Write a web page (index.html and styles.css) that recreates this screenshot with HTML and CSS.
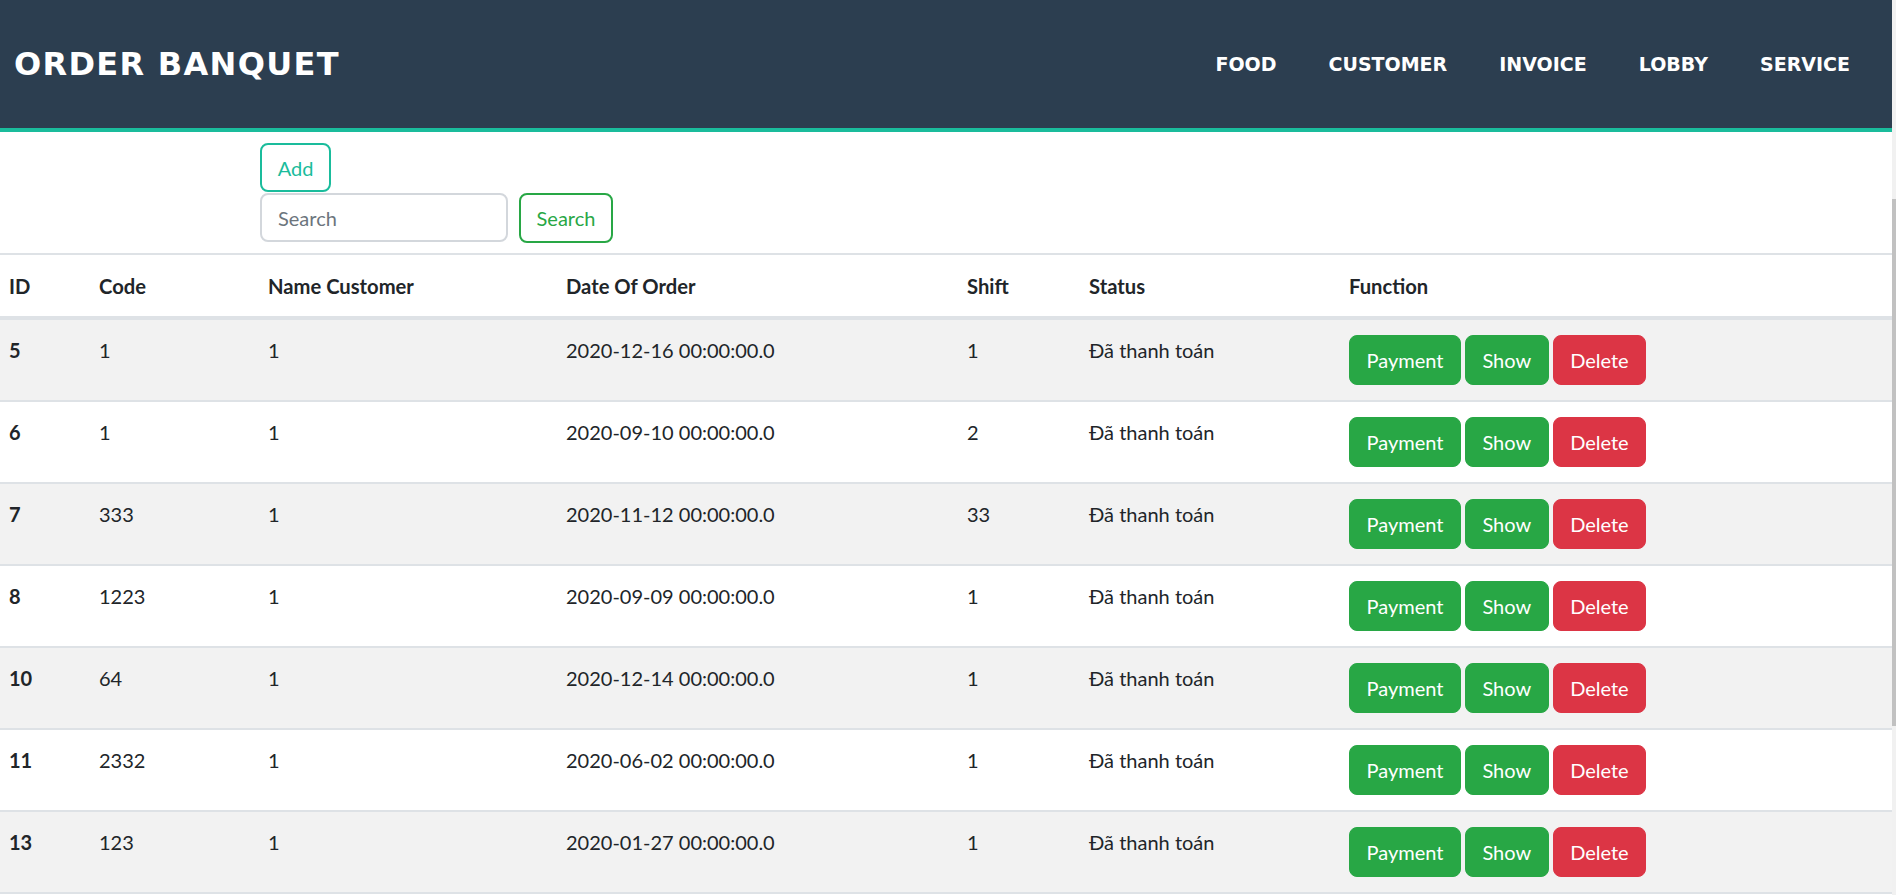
FILE: index.html
```html
<!DOCTYPE html>
<html lang="vi">
<head>
<meta charset="utf-8">
<title>Order Banquet</title>
<link rel="stylesheet" href="styles.css">
</head>
<body>
<div class="page">
  <div class="main">
    <header class="navbar">
      <div class="brand">ORDER BANQUET</div>
      <nav class="menu">
        <a href="#">FOOD</a>
        <a href="#">CUSTOMER</a>
        <a href="#">INVOICE</a>
        <a href="#">LOBBY</a>
        <a href="#">SERVICE</a>
      </nav>
    </header>

    <section class="toolbar">
      <button class="btn-add" type="button">Add</button>
      <form class="search">
        <input class="search-input" type="text" placeholder="Search">
        <button class="btn-search" type="button">Search</button>
      </form>
    </section>

    <table class="orders">
      <colgroup>
        <col class="c-id"><col class="c-code"><col class="c-name"><col class="c-date"><col class="c-shift"><col class="c-status"><col class="c-func">
      </colgroup>
      <thead>
        <tr><th>ID</th><th>Code</th><th>Name Customer</th><th>Date Of Order</th><th>Shift</th><th>Status</th><th>Function</th></tr>
      </thead>
      <tbody>
        <tr><td class="id">5</td><td>1</td><td>1</td><td>2020-12-16 00:00:00.0</td><td>1</td><td>Đã thanh toán</td>
          <td><div class="actions"><button class="btn green">Payment</button><button class="btn green">Show</button><button class="btn red">Delete</button></div></td></tr>
        <tr><td class="id">6</td><td>1</td><td>1</td><td>2020-09-10 00:00:00.0</td><td>2</td><td>Đã thanh toán</td>
          <td><div class="actions"><button class="btn green">Payment</button><button class="btn green">Show</button><button class="btn red">Delete</button></div></td></tr>
        <tr><td class="id">7</td><td>333</td><td>1</td><td>2020-11-12 00:00:00.0</td><td>33</td><td>Đã thanh toán</td>
          <td><div class="actions"><button class="btn green">Payment</button><button class="btn green">Show</button><button class="btn red">Delete</button></div></td></tr>
        <tr><td class="id">8</td><td>1223</td><td>1</td><td>2020-09-09 00:00:00.0</td><td>1</td><td>Đã thanh toán</td>
          <td><div class="actions"><button class="btn green">Payment</button><button class="btn green">Show</button><button class="btn red">Delete</button></div></td></tr>
        <tr><td class="id">10</td><td>64</td><td>1</td><td>2020-12-14 00:00:00.0</td><td>1</td><td>Đã thanh toán</td>
          <td><div class="actions"><button class="btn green">Payment</button><button class="btn green">Show</button><button class="btn red">Delete</button></div></td></tr>
        <tr><td class="id">11</td><td>2332</td><td>1</td><td>2020-06-02 00:00:00.0</td><td>1</td><td>Đã thanh toán</td>
          <td><div class="actions"><button class="btn green">Payment</button><button class="btn green">Show</button><button class="btn red">Delete</button></div></td></tr>
        <tr><td class="id">13</td><td>123</td><td>1</td><td>2020-01-27 00:00:00.0</td><td>1</td><td>Đã thanh toán</td>
          <td><div class="actions"><button class="btn green">Payment</button><button class="btn green">Show</button><button class="btn red">Delete</button></div></td></tr>
      </tbody>
    </table>
  </div>
  <div class="scrollbar"><div class="thumb"></div></div>
</div>
</body>
</html>
```

FILE: styles.css
```css
* { box-sizing: border-box; }
html, body { margin: 0; padding: 0; height: 100%; overflow: hidden; }
body {
  font-family: "Lato", "Open Sans", sans-serif;
  font-size: 20px;
  color: #212529;
  background: #fff;
}
.page { display: flex; height: 895px; }
.main { flex: 1; min-width: 0; }
.scrollbar { width: 4px; background: #f1f1f1; display: flex; flex-direction: column; }
.thumb { margin-top: 199px; height: 527px; background: #c1c1c1; }

.navbar {
  height: 132px;
  background: #2c3e50;
  border-bottom: 4px solid #1abc9c;
  display: flex;
  align-items: center;
  justify-content: space-between;
  padding: 0 16px 0 14px;
}
.brand {
  font-family: "DejaVu Sans", "Open Sans", sans-serif;
  font-weight: 700;
  font-size: 32px;
  color: #fff;
  letter-spacing: 1.3px;
}
.menu { display: flex; }
.menu a {
  font-family: "DejaVu Sans", "Open Sans", sans-serif;
  font-weight: 700;
  font-size: 19px;
  color: #fff;
  text-decoration: none;
  padding: 0 26px;
}

.toolbar { padding: 11px 0 0 260px; display: flex; flex-direction: column; align-items: flex-start; }
.btn-add {
  height: 49px;
  width: 71px;
  padding: 0;
  font: inherit;
  color: #1abc9c;
  background: #fff;
  border: 2px solid #1abc9c;
  border-radius: 8px;
}
.search { display: flex; gap: 11px; margin-top: 1px; }
.search-input {
  width: 248px;
  height: 49px;
  border: 2px solid #d3d7dc;
  border-radius: 8px;
  padding: 0 16px;
  font: inherit;
  color: #495057;
}
.search-input::placeholder { color: #6c757d; }
.btn-search {
  height: 50px;
  width: 94px;
  font: inherit;
  color: #28a745;
  background: #fff;
  border: 2px solid #28a745;
  border-radius: 8px;
  padding: 0;
}

.orders {
  width: 100%;
  margin-top: 10px;
  border-collapse: collapse;
  table-layout: fixed;
  border-top: 2px solid #dee2e6;
}
.c-id { width: 90px; }
.c-code { width: 169px; }
.c-name { width: 298px; }
.c-date { width: 401px; }
.c-shift { width: 122px; }
.c-status { width: 260px; }
.orders th, .orders td { text-align: left; vertical-align: top; padding: 15px 9px; }
.orders th {
  font-weight: 700;
  font-size: 20.2px;
  line-height: 32px;
  padding-bottom: 14px;
  border-bottom: 4px solid #dee2e6;
}
.orders td {
  line-height: 30px;
  border-bottom: 2px solid #dee2e6;
  white-space: nowrap;
}
.orders td.id { font-weight: 700; }
.orders tbody tr:nth-child(odd) { background: #f2f2f2; }

.actions { display: flex; gap: 4px; }
.btn {
  height: 50px;
  padding: 0 16.5px;
  font: inherit;
  color: #fff;
  border: 1px solid transparent;
  border-radius: 8px;
}
.btn.green { background: #28a745; border-color: #28a745; }
.btn.red { background: #dc3545; border-color: #dc3545; }
```
